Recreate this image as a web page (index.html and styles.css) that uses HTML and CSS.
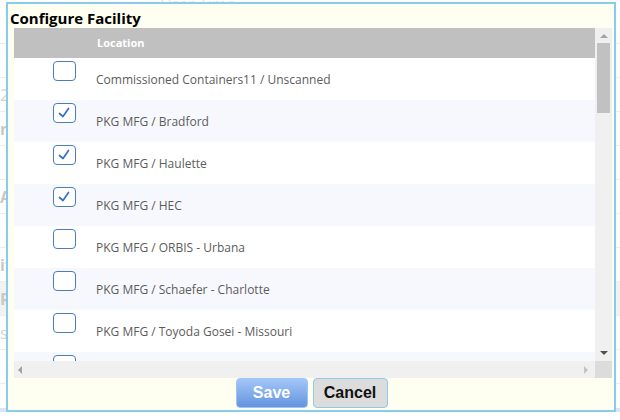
FILE: index.html
```html
<!DOCTYPE html>
<html>
<head>
<meta charset="utf-8">
<link rel="stylesheet" href="styles.css">
</head>
<body>
<div class="page">
  <div class="bg-head">User Time</div>
  <div class="bg-list">
    <div class="bg-row"></div>
    <div class="bg-row"></div>
    <div class="bg-row">2</div>
    <div class="bg-row bold">ns</div>
    <div class="bg-row"></div>
    <div class="bg-row bold">A</div>
    <div class="bg-row"></div>
    <div class="bg-row bold">it</div>
    <div class="bg-row shade bold">R</div>
    <div class="bg-row">s</div>
    <div class="bg-row"></div>
  </div>
  <div class="bg-foot"></div>
</div>

<div class="dialog">
  <div class="title">Configure Facility</div>
  <div class="grid">
    <div class="grid-main">
      <div class="viewport">
        <div class="head">
          <div class="c-check"></div>
          <div class="c-loc">Location</div>
        </div>
        <div class="row">
          <div class="c-check"><span class="box"></span></div>
          <div class="c-loc">Commissioned Containers11 / Unscanned</div>
        </div>
        <div class="row alt">
          <div class="c-check"><span class="box"><svg viewBox="0 0 23 20" width="23" height="20"><path d="M6.5 10.5 L10 13.5 L15.5 5.5" fill="none" stroke="#3b6fc0" stroke-width="1.7" stroke-linecap="round" stroke-linejoin="round"/></svg></span></div>
          <div class="c-loc">PKG MFG / Bradford</div>
        </div>
        <div class="row">
          <div class="c-check"><span class="box"><svg viewBox="0 0 23 20" width="23" height="20"><path d="M6.5 10.5 L10 13.5 L15.5 5.5" fill="none" stroke="#3b6fc0" stroke-width="1.7" stroke-linecap="round" stroke-linejoin="round"/></svg></span></div>
          <div class="c-loc">PKG MFG / Haulette</div>
        </div>
        <div class="row alt">
          <div class="c-check"><span class="box"><svg viewBox="0 0 23 20" width="23" height="20"><path d="M6.5 10.5 L10 13.5 L15.5 5.5" fill="none" stroke="#3b6fc0" stroke-width="1.7" stroke-linecap="round" stroke-linejoin="round"/></svg></span></div>
          <div class="c-loc">PKG MFG / HEC</div>
        </div>
        <div class="row">
          <div class="c-check"><span class="box"></span></div>
          <div class="c-loc">PKG MFG / ORBIS - Urbana</div>
        </div>
        <div class="row alt">
          <div class="c-check"><span class="box"></span></div>
          <div class="c-loc">PKG MFG / Schaefer - Charlotte</div>
        </div>
        <div class="row">
          <div class="c-check"><span class="box"></span></div>
          <div class="c-loc">PKG MFG / Toyoda Gosei - Missouri</div>
        </div>
        <div class="row alt">
          <div class="c-check"><span class="box"></span></div>
          <div class="c-loc"></div>
        </div>
      </div>
      <div class="vscroll">
        <span class="arrow up"></span>
        <div class="vtrack"><span class="vthumb"></span></div>
        <span class="arrow down"></span>
      </div>
    </div>
    <div class="hscroll">
      <div class="htrack">
        <span class="arrow left"></span>
        <span class="arrow right"></span>
      </div>
      <div class="corner"></div>
    </div>
  </div>
  <div class="buttons">
    <button class="btn save">Save</button>
    <button class="btn cancel">Cancel</button>
  </div>
</div>
</body>
</html>
```

FILE: styles.css
```css
* { box-sizing: border-box; }
html, body { margin: 0; padding: 0; }
body {
  width: 620px;
  height: 420px;
  overflow: hidden;
  background: #ffffff;
  font-family: "Open Sans", "Noto Sans", sans-serif;
  position: relative;
}
.page {
  width: 620px;
  height: 420px;
  display: flex;
  flex-direction: column;
}
.bg-head {
  height: 8px;
  line-height: 8px;
  padding-left: 160px;
  color: #e6e6e6;
  font-size: 16px;
  overflow: hidden;
}
.bg-list {
  flex: 1;
  display: flex;
  flex-direction: column;
  padding-top: 2px;
}
.bg-row {
  height: 34px;
  border-bottom: 1px solid #e9eef5;
  color: #d4d4d4;
  font-size: 16px;
  line-height: 34px;
  padding-left: 0;
}
.bg-row.bold { font-weight: 700; color: #c8c8c8; }
.bg-row.shade { background: #f2f2f2; }
.bg-foot {
  height: 12px;
  background: linear-gradient(#d6e6f6 0 4px, #ffffff 4px);
}

.dialog {
  position: absolute;
  left: 6px;
  top: 2px;
  width: 610px;
  height: 410px;
  border: 2px solid #87cdea;
  background: #fefff0;
  display: flex;
  flex-direction: column;
  padding: 0 2px 0 6px;
}
.title {
  height: 24px;
  margin-left: -4px;
  font-family: "Open Sans", "Noto Sans", sans-serif;
  font-weight: 700;
  font-size: 15px;
  line-height: 28px;
  color: #000;
}
.grid {
  height: 350px;
  display: flex;
  flex-direction: column;
}
.grid-main {
  height: 333px;
  display: flex;
}
.viewport {
  flex: 1;
  overflow: hidden;
  background: #fff;
}
.head {
  height: 30px;
  background: #c0c0c0;
  display: flex;
  align-items: center;
  color: #fff;
  font-weight: 700;
  font-size: 11px;
}
.c-check {
  width: 82px;
  flex: none;
  padding-left: 39px;
}
.c-loc { flex: 1; }
.head .c-loc { padding-left: 1px; padding-bottom: 1px; }
.row {
  height: 42px;
  display: flex;
  background: #fff;
  color: #5c5c5c;
  font-size: 12px;
}
.row.alt { background: #f7f8fd; }
.row .c-check { padding-top: 3px; }
.row .c-loc { padding-top: 13px; }
.box {
  display: block;
  width: 23px;
  height: 20px;
  border: 1.5px solid #4a7cc4;
  border-radius: 4px;
  background: #fff;
  position: relative;
}
.box svg {
  position: absolute;
  left: -1.5px;
  top: -1.5px;
}
.vscroll {
  width: 17px;
  background: #f0f0f0;
  display: flex;
  flex-direction: column;
  align-items: center;
}
.vtrack {
  flex: 1;
  width: 100%;
  padding: 0 2px;
}
.vthumb {
  display: block;
  width: 13px;
  height: 70px;
  margin-top: 1px;
  background: #c1c1c1;
}
.arrow {
  width: 0;
  height: 0;
  display: block;
}
.arrow.up {
  margin: 6px 0 4px;
  border-left: 4px solid transparent;
  border-right: 4px solid transparent;
  border-bottom: 4px solid #a3a3a3;
}
.arrow.down {
  margin: 6px 0 6px;
  border-left: 4px solid transparent;
  border-right: 4px solid transparent;
  border-top: 4px solid #505050;
}
.hscroll {
  height: 17px;
  display: flex;
}
.htrack {
  flex: 1;
  background: #f0f0f0;
  display: flex;
  align-items: center;
  justify-content: space-between;
  padding: 0 7px 0 4px;
}
.arrow.left {
  border-top: 4px solid transparent;
  border-bottom: 4px solid transparent;
  border-right: 4px solid #a3a3a3;
}
.arrow.right {
  border-top: 4px solid transparent;
  border-bottom: 4px solid transparent;
  border-left: 4px solid #c3c3c3;
}
.corner {
  width: 17px;
  background: #dcdcdc;
}
.buttons {
  height: 30px;
  display: flex;
  justify-content: center;
  gap: 5px;
  padding-right: 3px;
}
.btn {
  height: 30px;
  font-family: "Liberation Sans", Arial, sans-serif;
  font-weight: 700;
  font-size: 16px;
  border-radius: 4px;
  padding: 0;
}
.save {
  width: 72px;
  color: #fff;
  border: 1px solid #9ec4f2;
  background: linear-gradient(#a3c6f8, #6494de);
}
.cancel {
  width: 75px;
  color: #111;
  border: 1px solid #8fcbe8;
  background: #dcdcdc;
}
```
